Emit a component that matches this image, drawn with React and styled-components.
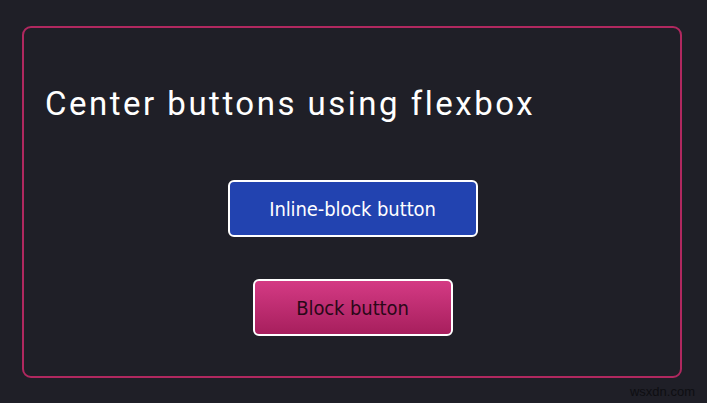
import React from "react"
import styled, { createGlobalStyle } from "styled-components"

const GlobalStyle = createGlobalStyle`
  html, body {
    margin: 0;
    padding: 0;
    background: #1f1f27;
  }
  body {
    width: 707px;
    height: 403px;
    overflow: hidden;
    font-family: Roboto, "Liberation Sans", sans-serif;
  }
`

const App = () => (
  <>
    <GlobalStyle />
    <Page>
      <Card>
        <Title>Center buttons using flexbox</Title>
        <ButtonStack>
          <InlineButton>Inline-block button</InlineButton>
          <BlockButton>Block button</BlockButton>
        </ButtonStack>
      </Card>
      <Watermark>wsxdn.com</Watermark>
    </Page>
  </>
)

export default App

const Page = styled.div`
  position: relative;
  width: 707px;
  height: 403px;
  padding: 26px 0 0 22px;
  box-sizing: border-box;
`

const Card = styled.div`
  width: 660px;
  height: 352px;
  box-sizing: border-box;
  border: 2px solid #b0285f;
  border-radius: 9px;
  padding: 56px 20px 0 21px;
  display: flex;
  flex-direction: column;
`

const Title = styled.h1`
  margin: 0;
  color: #ffffff;
  font-family: Roboto, sans-serif;
  font-weight: 400;
  font-size: 33px;
  line-height: 40px;
  letter-spacing: 2.5px;
  white-space: nowrap;
`

const ButtonStack = styled.div`
  display: flex;
  flex-direction: column;
  align-items: center;
  gap: 42px;
  margin-top: 56px;
`

const BaseButton = styled.button`
  height: 57px;
  padding: 0;
  box-sizing: border-box;
  border: 2px solid #ffffff;
  border-radius: 6px;
  font-family: "DejaVu Sans Condensed", "DejaVu Sans", sans-serif;
  font-size: 20px;
  letter-spacing: -0.1px;
  cursor: pointer;
`

const InlineButton = styled(BaseButton)`
  width: 250px;
  background: #2243b0;
  color: #ffffff;
`

const BlockButton = styled(BaseButton)`
  width: 200px;
  background: linear-gradient(#d43a84, #a71f5d);
  color: #2a0818;
`

const Watermark = styled.span`
  position: absolute;
  right: 12px;
  bottom: 4px;
  font-family: "Liberation Sans", sans-serif;
  font-size: 13px;
  color: #0e0e12;
`
